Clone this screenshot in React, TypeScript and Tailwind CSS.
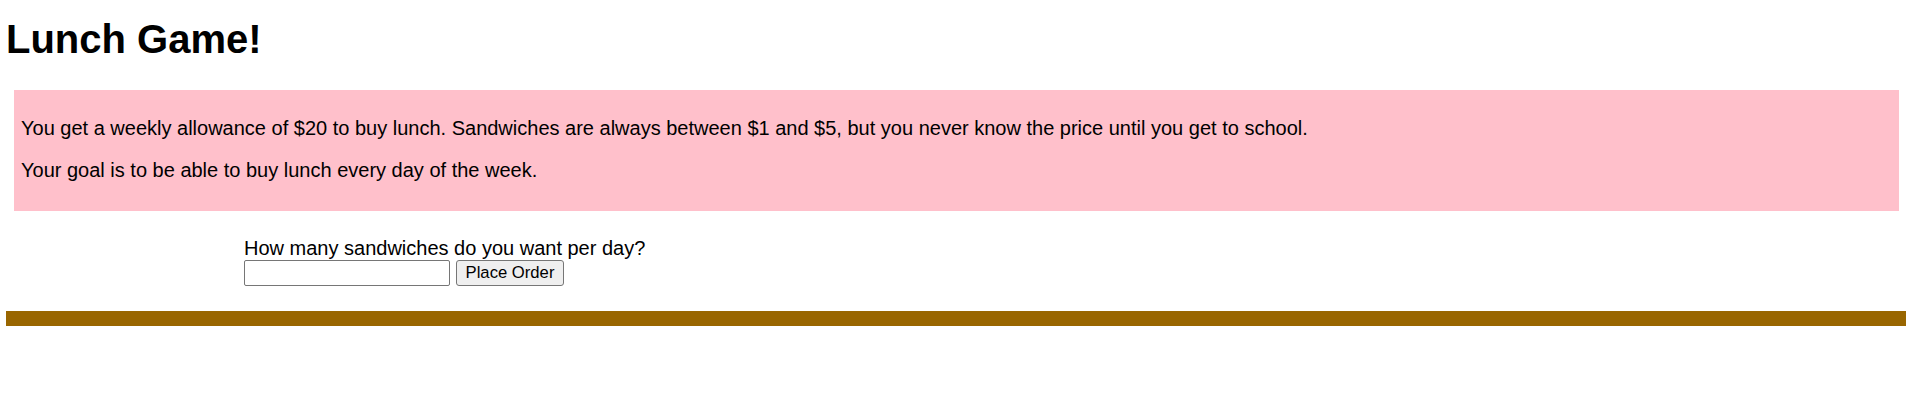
import React from "react";

export default function App() {
  return (
    <div className="min-h-[414px] bg-white px-[6px] pt-[16.4px] font-['Liberation_Sans',Arial,sans-serif] text-black">
      <h1 className="text-[40px] font-bold leading-[46px]">Lunch Game!</h1>
      <div className="mt-[27.6px] ml-[7.5px] mr-[7px] bg-[#ffc0cb] px-[7.5px] pt-[26.6px] pb-[28.4px] text-[20px] leading-[23px]">
        <p>
          You get a weekly allowance of $20 to buy lunch. Sandwiches are always between $1 and $5, but you never know the price until you get to school.
        </p>
        <p className="mt-[19.7px]">Your goal is to be able to buy lunch every day of the week.</p>
      </div>
      <div className="mt-[26px] ml-[238px] text-[20px] leading-[23px]">
        <div>How many sandwiches do you want per day?</div>
        <div className="flex items-center gap-[6px]">
          <input
            type="text"
            className="h-[26px] w-[206px] rounded-[2px] border border-[#767676] bg-white px-[2px] text-[16px]"
          />
          <button className="h-[26px] w-[108px] rounded-[3px] border border-[#767676] bg-[#efefef] text-[16.67px] leading-[20px] text-black">
            Place Order
          </button>
        </div>
      </div>
      <div className="mt-[25.7px] h-[14.4px] bg-[#996600]" />
    </div>
  );
}
